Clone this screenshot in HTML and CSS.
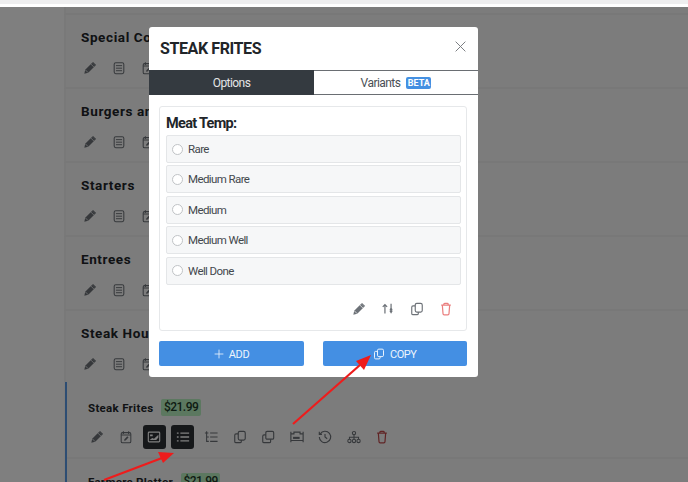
FILE: index.html
```html
<!DOCTYPE html>
<html lang="en">
<head>
<meta charset="utf-8">
<title>Steak Frites</title>
<link rel="stylesheet" href="styles.css">
</head>
<body>
<svg width="0" height="0" class="defs">
  <symbol id="i-pencil" viewBox="0 0 16 16"><path d="M1.500 14.500l1-4.500 8-8 3.500 3.500-8 8z" fill="currentColor"/><path d="M9 3.500l3.500 3.500M2.800 10.200l3 3" fill="none" stroke="#ffffff" stroke-width=".8"/><path d="M11.500 1l3.500 3.500-1 1L10.500 2z" fill="currentColor"/></symbol>
  <symbol id="i-list" viewBox="0 0 16 16"><rect x="2.500" y="2" width="11" height="12.500" rx="1.800" fill="none" stroke="currentColor" stroke-width="1.200"/><path d="M4.500 5.300h7M4.500 8.200h7M4.500 11.100h7" fill="none" stroke="currentColor" stroke-width="1.100"/></symbol>
  <symbol id="i-cal" viewBox="0 0 16 16"><rect x="2.500" y="3" width="11" height="11.500" rx="1.500" fill="none" stroke="currentColor" stroke-width="1.200"/><path d="M5 1.500v3M11 1.500v3M2.500 5.800h11" fill="none" stroke="currentColor" stroke-width="1.200"/><path d="M5.800 12.300l.4-1.800 3.300-3.300 1.400 1.400-3.300 3.300z" fill="currentColor"/></symbol>
  <symbol id="i-image" viewBox="0 0 16 16"><rect x="1.500" y="2.500" width="13" height="11" rx="1" fill="none" stroke="currentColor" stroke-width="1.300"/><path d="M3 11.500l3-2.500 2 1 5-4.500v3l-2.500 3zM3.500 5h3v2h-3z" fill="currentColor"/></symbol>
  <symbol id="i-bullets" viewBox="0 0 16 16"><path d="M5 3.500h10M5 8h10M5 12.500h10M1 3.500h2M1 8h2M1 12.500h2" fill="none" stroke="currentColor" stroke-width="1.500"/></symbol>
  <symbol id="i-tree" viewBox="0 0 16 16"><path d="M3 1.500v11.500h2.500M3 8h2.500M1 3.500h4M7 3.500h8.500M7 8h8.500M7 13h8.500" fill="none" stroke="currentColor" stroke-width="1.200"/></symbol>
  <symbol id="i-copy" viewBox="0 0 16 16"><rect x="6" y="1.500" width="8" height="10" rx="1.800" fill="none" stroke="currentColor" stroke-width="1.300"/><path d="M6 4.500H3.500A1.500 1.500 0 0 0 2 6v7a1.500 1.500 0 0 0 1.500 1.500H8A1.500 1.500 0 0 0 9.500 13v-1.500" fill="none" stroke="currentColor" stroke-width="1.300"/></symbol>
  <symbol id="i-clone" viewBox="0 0 16 16"><rect x="5.500" y="1.500" width="9" height="9" rx="1.500" fill="none" stroke="currentColor" stroke-width="1.300"/><path d="M5.500 5.500h-2A1.500 1.500 0 0 0 2 7v6a1.500 1.500 0 0 0 1.500 1.500h6A1.500 1.500 0 0 0 11 13v-2.500" fill="none" stroke="currentColor" stroke-width="1.300"/></symbol>
  <symbol id="i-bed" viewBox="0 0 16 16"><path d="M1 2v12M15 2v12M1 4.500h3.500v-2h7v2H15M1 12h14" fill="none" stroke="currentColor" stroke-width="1.300"/><rect x="3.500" y="7.800" width="7.500" height="2.400" fill="currentColor"/></symbol>
  <symbol id="i-history" viewBox="0 0 16 16"><path d="M2.500 4.500A6.500 6.500 0 1 1 1.500 8M1.500 2v3h3M8 4.500V8l2.500 2" fill="none" stroke="currentColor" stroke-width="1.300"/></symbol>
  <symbol id="i-org" viewBox="0 0 16 16"><circle cx="8" cy="3.500" r="1.900" fill="none" stroke="currentColor" stroke-width="1.200"/><circle cx="2.800" cy="12.500" r="1.900" fill="none" stroke="currentColor" stroke-width="1.200"/><circle cx="8" cy="12.500" r="1.900" fill="none" stroke="currentColor" stroke-width="1.200"/><circle cx="13.200" cy="12.500" r="1.900" fill="none" stroke="currentColor" stroke-width="1.200"/><path d="M8 5.500v5M2.800 10.500V8.200h10.400v2.300" fill="none" stroke="currentColor" stroke-width="1.200"/></symbol>
  <symbol id="i-trash" viewBox="0 0 16 16"><path d="M2.500 3.500h11M5.500 3.500V2.500a1 1 0 0 1 1-1h3a1 1 0 0 1 1 1v1M3.800 3.500l.8 10a1.300 1.300 0 0 0 1.300 1.200h4.200a1.300 1.300 0 0 0 1.300-1.200l.8-10" fill="none" stroke="currentColor" stroke-width="1.400"/></symbol>
  <symbol id="i-sort" viewBox="0 0 16 16"><path d="M4.500 13V3M2 5.500l2.500-2.500L7 5.500M11.500 2v9" fill="none" stroke="currentColor" stroke-width="1.400"/><path d="M9.500 10h4l-2 3.500z" fill="currentColor"/><circle cx="11.500" cy="8.500" r="1.500" fill="currentColor"/></symbol>
  <symbol id="i-plus" viewBox="0 0 16 16"><path d="M8 1v14M1 8h14" fill="none" stroke="currentColor" stroke-width="1.300"/></symbol>
  <symbol id="i-close" viewBox="0 0 16 16"><path d="M2 2l12 12M14 2L2 14" fill="none" stroke="currentColor" stroke-width="1.200"/></symbol>
</svg>

<div class="topbar"></div>
<main class="page">
  <div class="stub"></div>
  <section class="cat">
    <h3 class="cat-title">Special Combos</h3>
    <div class="tools"><svg class="ic"><use href="#i-pencil"/></svg><svg class="ic"><use href="#i-list"/></svg><svg class="ic"><use href="#i-cal"/></svg></div>
  </section>
  <section class="cat">
    <h3 class="cat-title">Burgers and Sandwiches</h3>
    <div class="tools"><svg class="ic"><use href="#i-pencil"/></svg><svg class="ic"><use href="#i-list"/></svg><svg class="ic"><use href="#i-cal"/></svg></div>
  </section>
  <section class="cat">
    <h3 class="cat-title">Starters</h3>
    <div class="tools"><svg class="ic"><use href="#i-pencil"/></svg><svg class="ic"><use href="#i-list"/></svg><svg class="ic"><use href="#i-cal"/></svg></div>
  </section>
  <section class="cat">
    <h3 class="cat-title">Entrees</h3>
    <div class="tools"><svg class="ic"><use href="#i-pencil"/></svg><svg class="ic"><use href="#i-list"/></svg><svg class="ic"><use href="#i-cal"/></svg></div>
  </section>
  <section class="cat cat-last">
    <h3 class="cat-title">Steak Houses</h3>
    <div class="tools"><svg class="ic"><use href="#i-pencil"/></svg><svg class="ic"><use href="#i-list"/></svg><svg class="ic"><use href="#i-cal"/></svg></div>
  </section>
  <section class="items">
    <div class="item item-open">
      <div class="item-head"><span class="item-name">Steak Frites</span><span class="price">$21.99</span></div>
      <div class="item-tools">
        <span class="tbtn"><svg class="ic"><use href="#i-pencil"/></svg></span>
        <span class="tbtn"><svg class="ic"><use href="#i-cal"/></svg></span>
        <span class="tbtn dark"><svg class="ic"><use href="#i-image"/></svg></span>
        <span class="tbtn dark"><svg class="ic"><use href="#i-bullets"/></svg></span>
        <span class="tbtn"><svg class="ic"><use href="#i-tree"/></svg></span>
        <span class="tbtn"><svg class="ic"><use href="#i-copy"/></svg></span>
        <span class="tbtn"><svg class="ic"><use href="#i-clone"/></svg></span>
        <span class="tbtn"><svg class="ic"><use href="#i-bed"/></svg></span>
        <span class="tbtn"><svg class="ic"><use href="#i-history"/></svg></span>
        <span class="tbtn"><svg class="ic"><use href="#i-org"/></svg></span>
        <span class="tbtn red"><svg class="ic"><use href="#i-trash"/></svg></span>
      </div>
    </div>
    <div class="item">
      <div class="item-head"><span class="item-name">Farmers Platter</span><span class="price">$21.99</span></div>
    </div>
  </section>
</main>

<div class="overlay"></div>

<div class="modal">
  <header class="modal-head">
    <h2 class="modal-title">STEAK FRITES</h2>
    <svg class="close"><use href="#i-close"/></svg>
  </header>
  <nav class="tabs">
    <div class="tab active">Options</div>
    <div class="tab">Variants <span class="beta">BETA</span></div>
  </nav>
  <div class="modal-body">
    <div class="panel">
      <h4 class="panel-title">Meat Temp:</h4>
      <div class="opts">
        <label class="opt"><span class="radio"></span>Rare</label>
        <label class="opt"><span class="radio"></span>Medium Rare</label>
        <label class="opt"><span class="radio"></span>Medium</label>
        <label class="opt"><span class="radio"></span>Medium Well</label>
        <label class="opt"><span class="radio"></span>Well Done</label>
      </div>
      <div class="panel-tools">
        <svg class="ic"><use href="#i-pencil"/></svg>
        <svg class="ic"><use href="#i-sort"/></svg>
        <svg class="ic"><use href="#i-copy"/></svg>
        <svg class="ic trash"><use href="#i-trash"/></svg>
      </div>
    </div>
    <div class="actions">
      <button class="btn"><svg class="btn-ic"><use href="#i-plus"/></svg>ADD</button>
      <button class="btn"><svg class="btn-ic wide"><use href="#i-copy"/></svg>COPY</button>
    </div>
  </div>
</div>

<svg class="arrows" viewBox="0 0 688 482">
  <path d="M293 424L360 365" stroke="#ee1c1c" stroke-width="2.200"/>
  <path d="M371 355L356 361L364 370Z" fill="#ee1c1c"/>
  <path d="M104 480L162 458" stroke="#ee1c1c" stroke-width="2.200"/>
  <path d="M174 453L158 452L163 463Z" fill="#ee1c1c"/>
</svg>
</body>
</html>
```
FILE: styles.css
```css
* { box-sizing: border-box; }
html, body { margin: 0; padding: 0; height: 482px; overflow: hidden; }
body { background: #ffffff; font-family: Roboto, "Liberation Sans", sans-serif; color: #212529; position: relative; }
.defs { position: absolute; }
.topbar { height: 4px; background: #eeeeef; margin-bottom: 3px; }
.page { margin-left: 64px; height: 475px; overflow: hidden; background: #f9f9f9; }
.stub { height: 8px; background: #f9f9f9; border-bottom: 2px solid #f0f0f0; border-left: 2px solid #f2f2f2; }
.cat { height: 74px; padding: 13px 15px 0; background: #f9f9f9; border-bottom: 2px solid #f1f1f1; border-left: 2px solid #f2f2f2; }
.cat-last { height: 71px; border-bottom: 0; }
.cat-title { margin: 0; font-size: 13.500px; line-height: 18px; font-weight: 700; letter-spacing: 0.6px; color: #212529; white-space: nowrap; }
.tools { display: flex; gap: 15px; margin-top: 15px; padding-left: 2px; }
.ic { width: 14px; height: 14px; color: #6c7177; flex: none; }
.items { border-left: 2px solid #5a9ae6; margin-left: 1px; background: #f9f9f9; }
.item { padding: 14px 0 0 21px; height: 77px; border-bottom: 2px solid #f0f0f0; background: #f9f9f9; }
.item-open { padding-top: 17px; }
.item-head { display: flex; align-items: center; gap: 8px; height: 17px; }
.item-name { font-size: 11.500px; font-weight: 700; letter-spacing: 0.3px; color: #23272b; white-space: nowrap; }
.price { background: #b8f0c0; color: #1e3a28; font-size: 12px; font-weight: 500; padding: 0 2.500px; border-radius: 2px; line-height: 17px; letter-spacing: -0.5px; }
.item-tools { display: flex; gap: 5.500px; margin-top: 9px; margin-left: -2.500px; }
.tbtn { width: 23px; height: 24px; display: flex; align-items: center; justify-content: center; border-radius: 3px; color: #6c7177; }
.tbtn .ic { color: inherit; }
.tbtn.dark { background: #2c3035; color: #ffffff; }
.tbtn.red { color: #c0494b; }
.overlay { position: absolute; inset: 7px 0 0 0; background: rgba(0, 0, 0, 0.5); }
.modal { position: absolute; left: 149px; top: 27px; width: 329px; height: 350px; background: #ffffff; border-radius: 3px; display: flex; flex-direction: column; }
.modal-head { height: 43px; padding: 0 11px; display: flex; align-items: center; justify-content: space-between; }
.modal-title { margin: 0; font-size: 16px; font-weight: 700; color: #212529; line-height: 1; letter-spacing: -0.4px; }
.close { width: 13px; height: 13px; color: #787b7f; margin-top: -4px; }
.tabs { display: flex; height: 25px; border-bottom: 1px solid #6a6e73; border-top: 1px solid #6a6e73; flex: none; }
.tab { flex: 1 1 0; display: flex; align-items: center; justify-content: center; gap: 6px; font-size: 12px; letter-spacing: -0.55px; color: #4a4f55; }
.tab.active { background: #343a40; color: #e4e5e6; margin: -1px 0; flex: none; width: 165px; }
.beta { background: #4490e2; color: #ffffff; font-size: 9px; font-weight: 700; height: 12px; width: 25px; display: flex; align-items: center; justify-content: center; border-radius: 2px; letter-spacing: 0; }
.modal-body { padding: 11px 11px 0 10px; display: flex; flex-direction: column; }
.panel { border: 1px solid #e6e8ea; border-radius: 3px; height: 225px; padding: 8px 5px 0 6px; }
.panel-title { margin: 0 0 2px; font-size: 14.500px; font-weight: 700; line-height: 18px; color: #212529; letter-spacing: -0.7px; }
.opts { display: flex; flex-direction: column; gap: 2.400px; }
.opt { height: 28px; background: #f6f7f8; border: 1px solid #e4e6e8; border-radius: 2px; display: flex; align-items: center; font-size: 11.500px; letter-spacing: -0.6px; color: #43484d; padding-left: 5px; gap: 5px; }
.radio { width: 11px; height: 11px; border: 1px solid #c0c3c6; border-radius: 50%; background: #ffffff; flex: none; }
.panel-tools { display: flex; justify-content: flex-end; gap: 15px; margin-top: 17px; padding-right: 8px; }
.panel-tools .trash { color: #ea7e7e; }
.actions { display: flex; justify-content: space-between; margin-top: 10px; }
.btn { width: 145px; height: 25px; background: #448fe3; color: #eef5fd; border: 0; border-radius: 2px; display: flex; align-items: center; justify-content: center; gap: 5px; font-family: inherit; font-size: 11px; letter-spacing: -0.4px; padding: 1px 0 0; }
.btn + .btn { width: 144.500px; }
.btn-ic { width: 10px; height: 10px; color: #eef5fd; }
.btn-ic.wide { width: 12px; height: 12px; }
.arrows { position: absolute; left: 0; top: 0; width: 688px; height: 482px; pointer-events: none; }
```
